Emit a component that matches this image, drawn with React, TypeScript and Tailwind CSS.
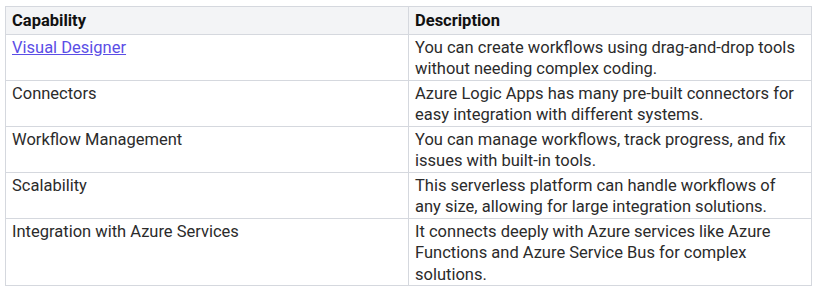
const rows = [
  {
    cap: "Visual Designer",
    link: true,
    desc: "You can create workflows using drag-and-drop tools without needing complex coding.",
  },
  {
    cap: "Connectors",
    desc: "Azure Logic Apps has many pre-built connectors for easy integration with different systems.",
  },
  {
    cap: "Workflow Management",
    desc: "You can manage workflows, track progress, and fix issues with built-in tools.",
  },
  {
    cap: "Scalability",
    desc: "This serverless platform can handle workflows of any size, allowing for large integration solutions.",
  },
  {
    cap: "Integration with Azure Services",
    desc: "It connects deeply with Azure services like Azure Functions and Azure Service Bus for complex solutions.",
  },
];

export default function App() {
  return (
    <div className="bg-white pl-[5px] pt-[6px] font-['Roboto',sans-serif] text-[16.5px] leading-[21.5px] text-[#2b2b2b]">
      <table className="w-[807px] table-fixed border-collapse">
        <thead>
          <tr className="bg-[#f3f4f6]">
            <th className="w-[403px] border border-[#d5d8de] px-[6px] pt-[3px] pb-[2px] text-left font-bold text-[#111]">
              Capability
            </th>
            <th className="border border-[#d5d8de] px-[6px] pt-[3px] pb-[2px] text-left font-bold text-[#111]">
              Description
            </th>
          </tr>
        </thead>
        <tbody>
          {rows.map((r) => (
            <tr key={r.cap}>
              <td className="border border-[#d5d8de] px-[6px] pt-[2px] pb-0 align-top">
                {r.link ? (
                  <a href="#" className="text-[#5b4ee6] underline">
                    {r.cap}
                  </a>
                ) : (
                  r.cap
                )}
              </td>
              <td className="border border-[#d5d8de] px-[6px] pt-[2px] pb-0 align-top">
                {r.desc}
              </td>
            </tr>
          ))}
        </tbody>
      </table>
    </div>
  );
}
